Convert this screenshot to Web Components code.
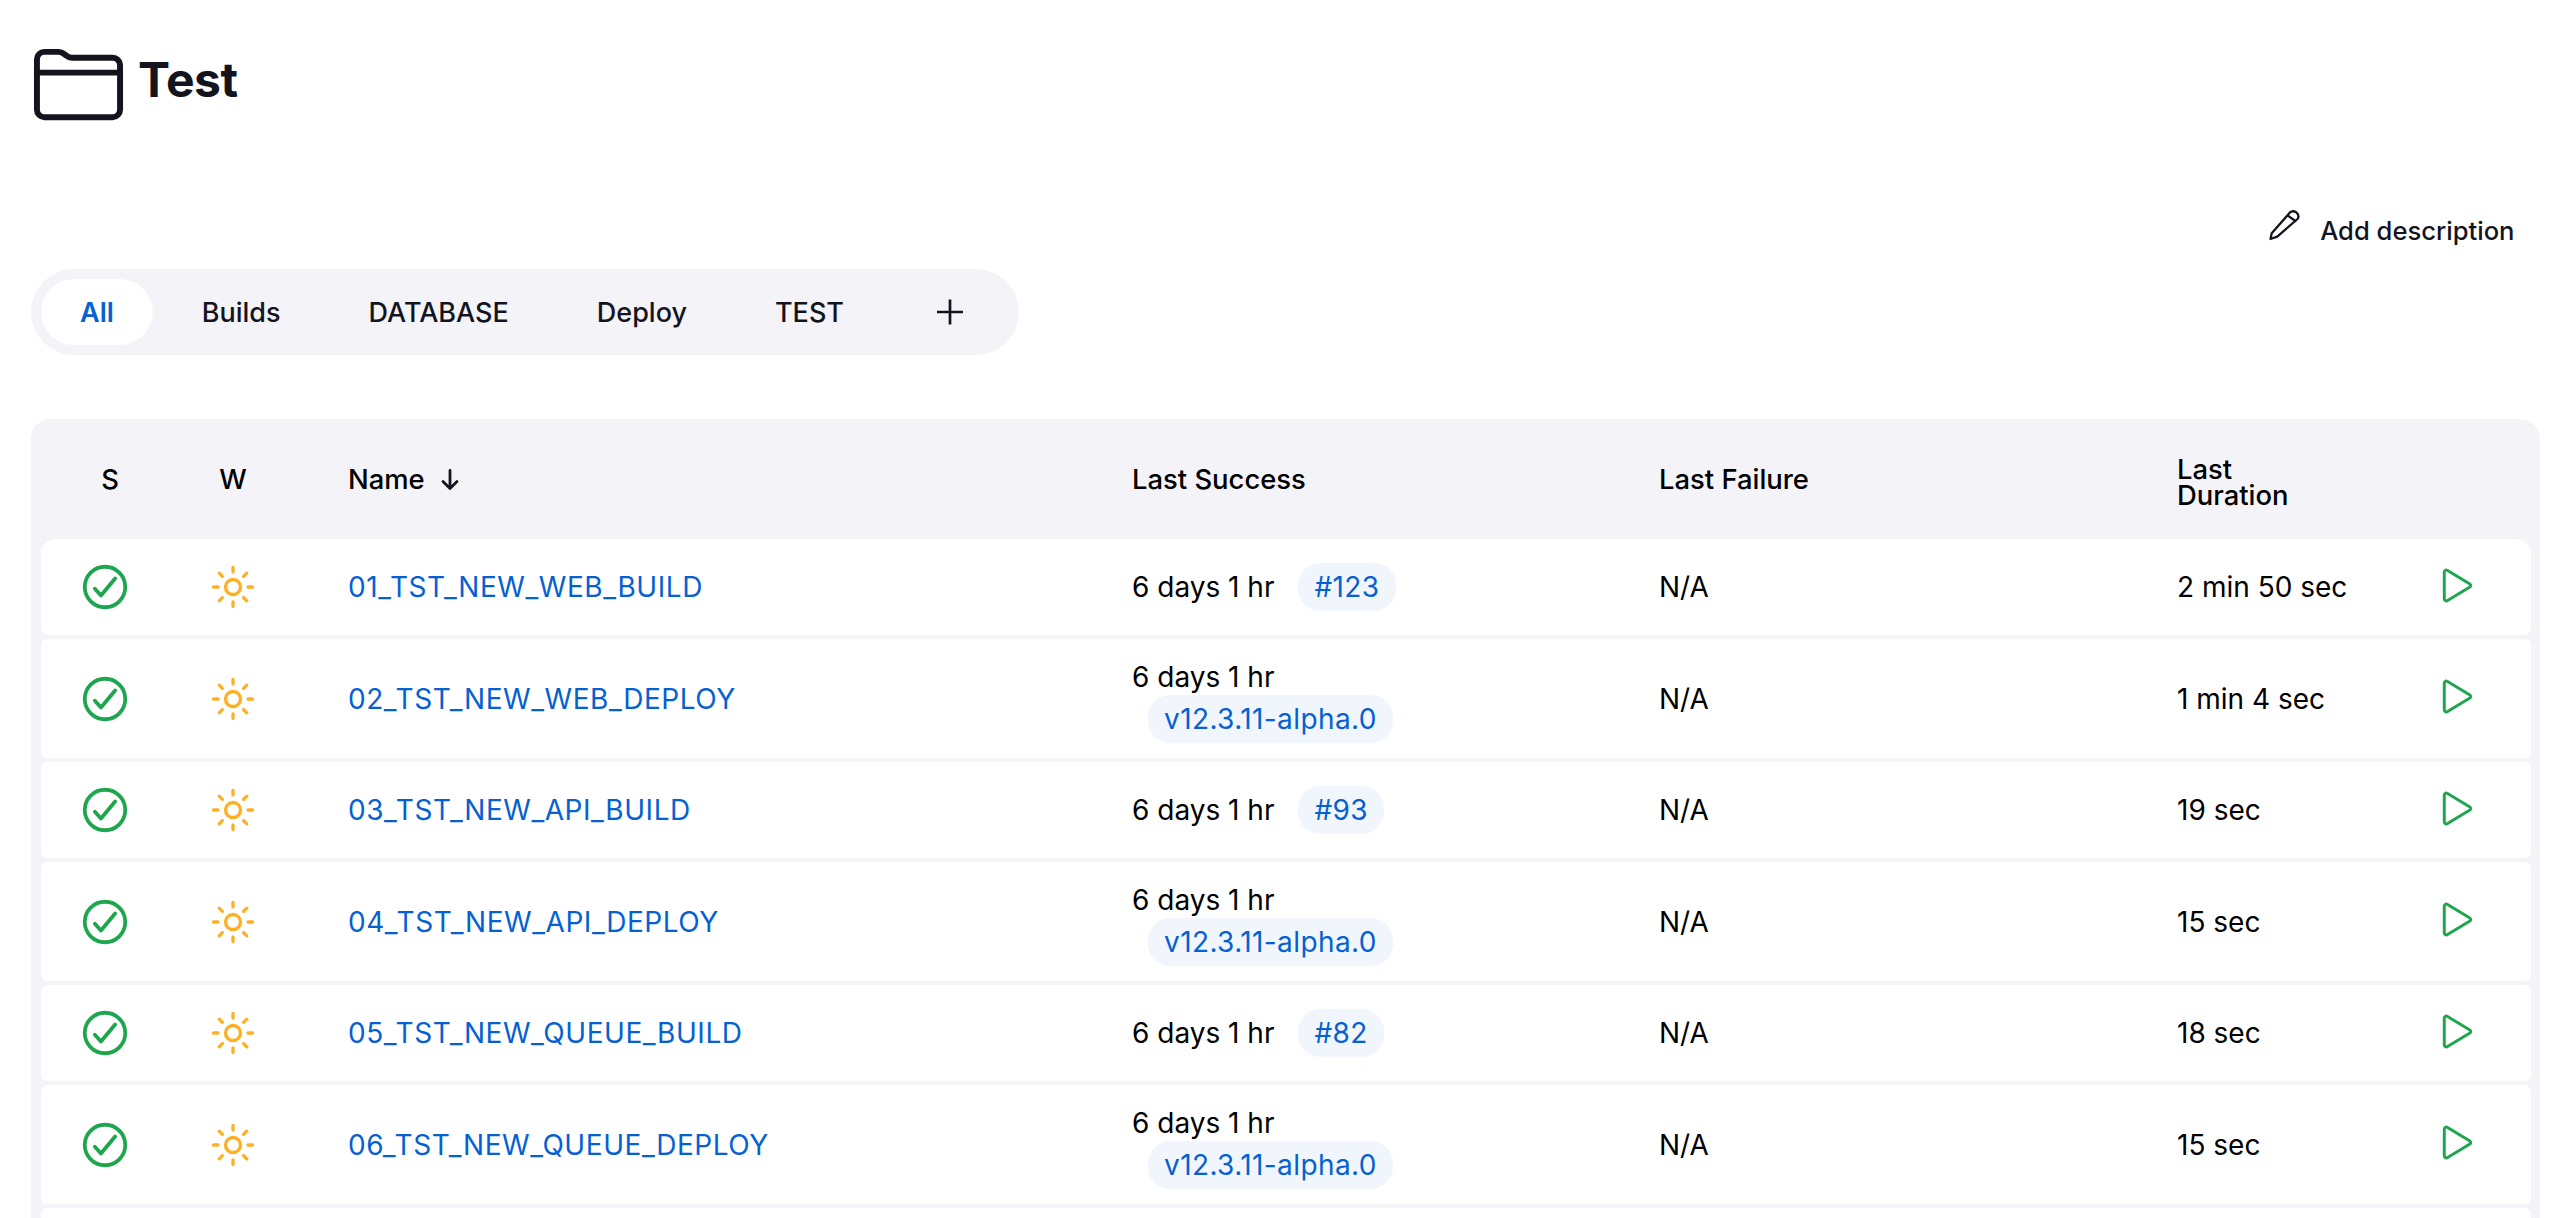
<!DOCTYPE html>
<html lang="en">
<head>
<meta charset="utf-8">
<title>Test</title>
<style>
  html, body {
    margin: 0;
    height: 1218px;
    overflow: hidden;
    background: #fff;
    font-family: Inter, "Liberation Sans", sans-serif;
  }
</style>
</head>
<body>
<folder-page>
  <folder-title slot="title">Test</folder-title>
  <add-description slot="description">Add description</add-description>
  <view-tabs slot="tabs">
    <view-tab active>All</view-tab>
    <view-tab>Builds</view-tab>
    <view-tab>DATABASE</view-tab>
    <view-tab>Deploy</view-tab>
    <view-tab>TEST</view-tab>
    <view-tab add></view-tab>
  </view-tabs>
  <job-table slot="table">
    <job-row name="01_TST_NEW_WEB_BUILD" build="#123" duration="2 min 50 sec"></job-row>
    <job-row name="02_TST_NEW_WEB_DEPLOY" build="v12.3.11-alpha.0" duration="1 min 4 sec" tall></job-row>
    <job-row name="03_TST_NEW_API_BUILD" build="#93" duration="19 sec"></job-row>
    <job-row name="04_TST_NEW_API_DEPLOY" build="v12.3.11-alpha.0" duration="15 sec" tall></job-row>
    <job-row name="05_TST_NEW_QUEUE_BUILD" build="#82" duration="18 sec"></job-row>
    <job-row name="06_TST_NEW_QUEUE_DEPLOY" build="v12.3.11-alpha.0" duration="15 sec" tall></job-row>
    <job-row empty></job-row>
  </job-table>
</folder-page>

<script>
const columns = '128px 128px 835px 527px 518px 257px 97px'

const pageTemplate = document.createElement('template')
pageTemplate.innerHTML = `
  <style>
    :host {
      display: block;
      padding: 37px 24px 0 31px;
      color: #14141f;
    }
    .description {
      display: flex;
      justify-content: flex-end;
      margin-top: 75px;
      padding-right: 26.5px;
    }
    .tabs {
      margin-top: 25px;
    }
    .table {
      margin-top: 64px;
    }
  </style>
  <slot name="title"></slot>
  <div class="description"><slot name="description"></slot></div>
  <div class="tabs"><slot name="tabs"></slot></div>
  <div class="table"><slot name="table"></slot></div>
`

class FolderPage extends HTMLElement {
  constructor () {
    super()
    this.attachShadow({ mode: 'open' })
    this.shadowRoot.appendChild(pageTemplate.content.cloneNode(true))
  }
}

const titleTemplate = document.createElement('template')
titleTemplate.innerHTML = `
  <style>
    :host {
      display: flex;
      align-items: center;
      gap: 12px;
      height: 95px;
    }
    svg {
      width: 95px;
      height: 95px;
      flex: none;
    }
    h1 {
      margin: 0;
      padding-bottom: 10px;
      font-size: 48px;
      font-weight: 700;
      letter-spacing: -0.4px;
      line-height: 60px;
      color: #14141f;
    }
  </style>
  <svg viewBox="0 0 512 512" fill="none" stroke="#14141f" stroke-width="32" stroke-linecap="round" stroke-linejoin="round">
    <path d="M440 432H72a40 40 0 01-40-40V120a40 40 0 0140-40h75.89a40 40 0 0122.19 6.72l27.84 18.56a40 40 0 0022.19 6.72H440a40 40 0 0140 40v240a40 40 0 01-40 40zM32 192h448"/>
  </svg>
  <h1><slot></slot></h1>
`

class FolderTitle extends HTMLElement {
  constructor () {
    super()
    this.attachShadow({ mode: 'open' })
    this.shadowRoot.appendChild(titleTemplate.content.cloneNode(true))
  }
}

const descriptionTemplate = document.createElement('template')
descriptionTemplate.innerHTML = `
  <style>
    :host {
      display: flex;
      align-items: flex-start;
      gap: 17px;
      height: 37px;
      font-size: 25.6px;
      font-weight: 500;
      line-height: 37px;
      color: #14141f;
    }
    svg {
      width: 36px;
      height: 36px;
      margin-top: 1px;
      flex: none;
    }
    span {
      position: relative;
      top: 5px;
    }
  </style>
  <svg viewBox="0 0 36 36" fill="none" stroke="#14141f" stroke-width="2.3" stroke-linecap="round" stroke-linejoin="round">
    <path d="M3.5 31L4.7 25.3L22.7 4.7A5.2 5.2 0 0 1 31 10.5L10.3 28.7ZM20.5 7.4L28.4 13"/>
  </svg>
  <span><slot></slot></span>
`

class AddDescription extends HTMLElement {
  constructor () {
    super()
    this.attachShadow({ mode: 'open' })
    this.shadowRoot.appendChild(descriptionTemplate.content.cloneNode(true))
  }
}

const tabsTemplate = document.createElement('template')
tabsTemplate.innerHTML = `
  <style>
    :host {
      display: inline-flex;
      align-items: center;
      gap: 10px;
      height: 86px;
      padding: 0 10px;
      box-sizing: border-box;
      width: 988px;
      border-radius: 43px;
      background: #f3f3f8;
    }
  </style>
  <slot></slot>
`

class ViewTabs extends HTMLElement {
  constructor () {
    super()
    this.attachShadow({ mode: 'open' })
    this.shadowRoot.appendChild(tabsTemplate.content.cloneNode(true))
  }
}

const tabTemplate = document.createElement('template')
tabTemplate.innerHTML = `
  <style>
    :host {
      display: flex;
      align-items: center;
      height: 66px;
      padding: 0 39px;
      border-radius: 33px;
      font-size: 27px;
      font-weight: 500;
      color: #14141f;
    }
    :host([active]) {
      background: #fff;
      color: #0561d1;
      font-weight: 600;
    }
    svg {
      display: none;
      width: 30px;
      height: 30px;
    }
    :host([add]) {
      padding: 0 0 0 42px;
    }
    :host([add]) svg {
      display: block;
    }
  </style>
  <slot></slot>
  <svg viewBox="0 0 30 30" fill="none" stroke="#14141f" stroke-width="2.7">
    <path d="M15 2.5v25M2 15h26"/>
  </svg>
`

class ViewTab extends HTMLElement {
  constructor () {
    super()
    this.attachShadow({ mode: 'open' })
    this.shadowRoot.appendChild(tabTemplate.content.cloneNode(true))
  }
}

const tableTemplate = document.createElement('template')
tableTemplate.innerHTML = `
  <style>
    :host {
      display: block;
      box-sizing: border-box;
      width: 2509px;
      padding: 0 9px 0 10px;
      border-radius: 20px 20px 0 0;
      background: #f3f3f8;
    }
    .head {
      display: grid;
      grid-template-columns: ${columns};
      align-items: center;
      height: 120px;
      font-size: 27.4px;
      font-weight: 500;
      line-height: 26px;
      color: #000;
    }
    .mid {
      padding-left: 10px;
      text-align: center;
    }
    .name {
      display: flex;
      align-items: center;
      gap: 15px;
      padding-left: 51px;
    }
    .name svg {
      width: 20px;
      height: 24px;
    }
    .duration {
      margin-top: 6px;
    }
    .rows {
      display: flex;
      flex-direction: column;
      gap: 4px;
    }
  </style>
  <div class="head">
    <div class="mid">S</div>
    <div class="mid" style="padding-left:0">W</div>
    <div class="name">Name
      <svg viewBox="0 0 20 24" fill="none" stroke="#14141f" stroke-width="2.8" stroke-linecap="round" stroke-linejoin="round">
        <path d="M10 3.5v18M3 14.5l7 7 7-7"/>
      </svg>
    </div>
    <div>Last Success</div>
    <div>Last Failure</div>
    <div class="duration">Last<br>Duration</div>
    <div></div>
  </div>
  <div class="rows"><slot></slot></div>
`

class JobTable extends HTMLElement {
  constructor () {
    super()
    this.attachShadow({ mode: 'open' })
    this.shadowRoot.appendChild(tableTemplate.content.cloneNode(true))
  }
}

const rowTemplate = document.createElement('template')
rowTemplate.innerHTML = `
  <style>
    :host {
      display: grid;
      grid-template-columns: ${columns};
      align-items: center;
      height: 96px;
      border-radius: 6px;
      background: #fff;
      font-size: 28px;
      font-weight: 400;
      color: #000;
    }
    :host(:first-child) {
      border-radius: 14px 14px 6px 6px;
    }
    :host([tall]) {
      height: 119px;
    }
    .icon {
      display: flex;
      justify-content: center;
    }
    .status svg {
      width: 54px;
      height: 54px;
    }
    .weather svg {
      width: 48px;
      height: 48px;
    }
    a {
      color: #0561d1;
      text-decoration: none;
      letter-spacing: 0.55px;
      padding-left: 51px;
    }
    .success {
      display: flex;
      align-items: center;
      gap: 24px;
    }
    :host([tall]) .success {
      display: block;
      padding-top: 5px;
    }
    :host([tall]) .time {
      display: block;
      line-height: 35px;
    }
    :host([tall]) .pill {
      margin-left: 16px;
    }
    .pill {
      display: inline-block;
      height: 48px;
      padding: 0 16px;
      border-radius: 22px;
      background: #f1f6fc;
      color: #0561d1;
      letter-spacing: 0.4px;
      line-height: 48px;
    }
    .play {
      margin: -4px 0 0 0;
      width: 47px;
      height: 47px;
      display: block;
    }
  </style>
  <div class="icon status">
    <svg viewBox="0 0 512 512" fill="none" stroke="#1ea64e" stroke-width="36" stroke-linecap="round" stroke-linejoin="round">
      <path d="M448 256c0-106-86-192-192-192S64 150 64 256s86 192 192 192 192-86 192-192z"/>
      <path d="M352 176L217.6 336 160 272"/>
    </svg>
  </div>
  <div class="icon weather">
    <svg viewBox="0 0 512 512" fill="none" stroke="#fdb022" stroke-width="35" stroke-linecap="round" stroke-linejoin="round">
      <path d="M256 48v48M256 416v48M403.08 108.92l-33.94 33.94M142.86 369.14l-33.94 33.94M464 256h-48M96 256H48M403.08 403.08l-33.94-33.94M142.86 142.86l-33.94-33.94"/>
      <circle cx="256" cy="256" r="80"/>
    </svg>
  </div>
  <div><a class="job"></a></div>
  <div class="success"><span class="time">6 days 1 hr</span><span class="pill"></span></div>
  <div>N/A</div>
  <div class="duration"></div>
  <div>
    <svg class="play" viewBox="0 0 512 512" fill="none" stroke="#1ea64e" stroke-width="32" stroke-linejoin="round">
      <path d="M112 111v290c0 17.44 17 28.52 31 20.16l247.9-148.37c12.12-7.25 12.12-26.33 0-33.58L143 90.84c-14-8.36-31 2.72-31 20.16z"/>
    </svg>
  </div>
`

class JobRow extends HTMLElement {
  constructor () {
    super()
    this.attachShadow({ mode: 'open' })
    if (this.hasAttribute('empty')) return
    this.shadowRoot.appendChild(rowTemplate.content.cloneNode(true))
  }

  connectedCallback () {
    if (this.hasAttribute('empty')) {
      this.style.cssText = 'display:block;height:10px;background:#fff;border-radius:6px 6px 0 0'
      return
    }
    this.shadowRoot.querySelector('.job').textContent = this.getAttribute('name')
    this.shadowRoot.querySelector('.pill').textContent = this.getAttribute('build')
    this.shadowRoot.querySelector('.duration').textContent = this.getAttribute('duration')
  }
}

window.customElements.define('folder-page', FolderPage)
window.customElements.define('folder-title', FolderTitle)
window.customElements.define('add-description', AddDescription)
window.customElements.define('view-tabs', ViewTabs)
window.customElements.define('view-tab', ViewTab)
window.customElements.define('job-table', JobTable)
window.customElements.define('job-row', JobRow)
</script>
</body>
</html>
